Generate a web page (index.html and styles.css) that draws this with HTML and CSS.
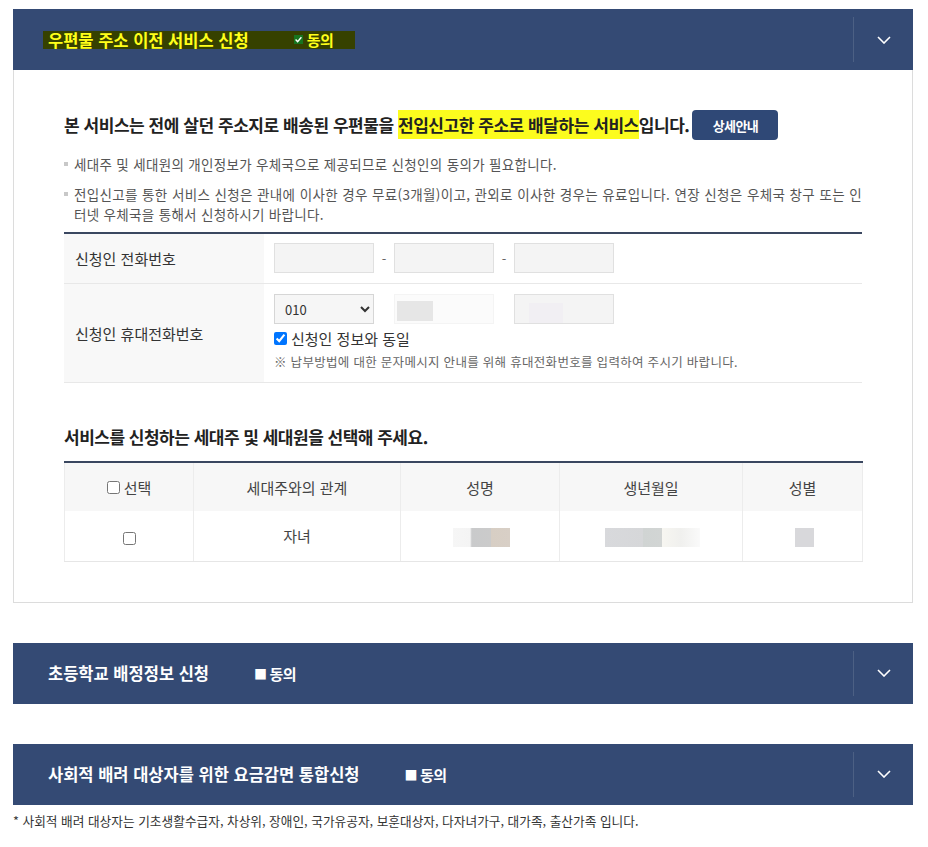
FILE: index.html
```html
<!DOCTYPE html>
<html lang="ko">
<head>
<meta charset="utf-8">
<title>우편물 주소 이전 서비스 신청</title>
<link rel="stylesheet" href="styles.css">
</head>
<body>
<div class="wrap">
  <section class="acc">
    <div class="acc-head">
      <div class="acc-title">
        <span class="hl-dark"><span class="t">우편물 주소 이전 서비스 신청</span><span class="agree"><span class="chk"><svg width="9" height="9" viewBox="0 0 9 9"><polyline points="1.6,4.6 3.6,6.6 7.4,2.2" fill="none" stroke="#fff" stroke-width="1.4"/></svg></span>동의</span></span>
      </div>
      <div class="acc-toggle"><svg width="14" height="8" viewBox="0 0 14 8"><polyline points="1,1 7,7 13,1" fill="none" stroke="#fff" stroke-width="1.6"/></svg></div>
    </div>
    <div class="acc-body">
      <div class="lead">
        <h2 class="lead-text">본 서비스는 전에 살던 주소지로 배송된 우편물을 <mark class="hl-yellow">전입신고한 주소로 배달하는 서비스</mark>입니다.</h2>
        <button class="btn-detail" type="button">상세안내</button>
      </div>
      <ul class="bullets">
        <li>세대주 및 세대원의 개인정보가 우체국으로 제공되므로 신청인의 동의가 필요합니다.</li>
        <li>전입신고를 통한 서비스 신청은 관내에 이사한 경우 무료(3개월)이고, 관외로 이사한 경우는 유료입니다. 연장 신청은 우체국 창구 또는 인터넷 우체국을 통해서 신청하시기 바랍니다.</li>
      </ul>

      <table class="form-table">
        <tr class="r1">
          <th>신청인 전화번호</th>
          <td>
            <div class="phone">
              <span class="inp"></span><span class="dash">-</span><span class="inp"></span><span class="dash">-</span><span class="inp"></span>
            </div>
          </td>
        </tr>
        <tr class="r2">
          <th>신청인 휴대전화번호</th>
          <td>
            <div class="phone">
              <select class="sel"><option>010</option></select><span class="dash blank"></span><span class="inp redact"><span class="rb"></span></span><span class="dash blank"></span><span class="inp redact2"><span class="rb2"></span></span>
            </div>
            <label class="same"><input type="checkbox" checked> 신청인 정보와 동일</label>
            <p class="note">※ 납부방법에 대한 문자메시지 안내를 위해 휴대전화번호를 입력하여 주시기 바랍니다.</p>
          </td>
        </tr>
      </table>

      <h3 class="sub-title">서비스를 신청하는 세대주 및 세대원을 선택해 주세요.</h3>

      <table class="list-table">
        <colgroup>
          <col class="c1"><col class="c2"><col class="c3"><col class="c4"><col class="c5">
        </colgroup>
        <thead>
          <tr>
            <th><label class="all"><input type="checkbox"> 선택</label></th>
            <th>세대주와의 관계</th>
            <th>성명</th>
            <th>생년월일</th>
            <th>성별</th>
          </tr>
        </thead>
        <tbody>
          <tr>
            <td><input type="checkbox"></td>
            <td>자녀</td>
            <td><span class="blur b-name"></span></td>
            <td><span class="blur b-birth"></span></td>
            <td><span class="blur b-sex"></span></td>
          </tr>
        </tbody>
      </table>
    </div>
  </section>

  <section class="acc gap">
    <div class="acc-head">
      <div class="acc-title"><span class="t">초등학교 배정정보 신청</span><span class="agree"><span class="sq">■</span>동의</span></div>
      <div class="acc-toggle"><svg width="14" height="8" viewBox="0 0 14 8"><polyline points="1,1 7,7 13,1" fill="none" stroke="#fff" stroke-width="1.6"/></svg></div>
    </div>
  </section>

  <section class="acc gap">
    <div class="acc-head">
      <div class="acc-title"><span class="t">사회적 배려 대상자를 위한 요금감면 통합신청</span><span class="agree"><span class="sq">■</span>동의</span></div>
      <div class="acc-toggle"><svg width="14" height="8" viewBox="0 0 14 8"><polyline points="1,1 7,7 13,1" fill="none" stroke="#fff" stroke-width="1.6"/></svg></div>
    </div>
    <p class="foot">* 사회적 배려 대상자는 기초생활수급자, 차상위, 장애인, 국가유공자, 보훈대상자, 다자녀가구, 대가족, 출산가족 입니다.</p>
  </section>
</div>
</body>
</html>
```

FILE: styles.css
```css
* { box-sizing: border-box; }
body {
  margin: 0;
  background: #fff;
  color: #333;
  font-family: "Noto Sans CJK KR", "Noto Sans", sans-serif;
}
.wrap {
  width: 900px;
  margin: 0 0 0 13px;
  padding-top: 9px;
}
.acc.gap { margin-top: 40px; }

.acc-head {
  display: flex;
  align-items: stretch;
  height: 61px;
  background: #344a74;
}
.acc-title {
  flex: 1;
  display: flex;
  align-items: center;
  padding-left: 35px;
  color: #fff;
  font-weight: 700;
  font-size: 16.5px;
  letter-spacing: 0;
}
.acc-title .t { line-height: 20px; }
.hl-dark {
  display: flex;
  align-items: center;
  height: 18px;
  margin-left: -5px;
  padding: 0 22px 0 5px;
  background: #364100;
  color: #ffff1a;
}
.agree {
  display: inline-flex;
  align-items: center;
  margin-left: 45px;
  font-size: 15px;
  font-weight: 700;
  letter-spacing: -0.5px;
}
.chk {
  display: inline-flex;
  align-items: center;
  justify-content: center;
  width: 9px;
  height: 9px;
  margin-right: 4px;
  background: #17751f;
}
.sq {
  font-size: 13px;
  margin-right: 3px;
}
.acc-toggle {
  width: 60px;
  margin: 8px 0;
  border-left: 1px solid rgba(255, 255, 255, 0.12);
  display: flex;
  align-items: center;
  justify-content: center;
}

.acc-body {
  border: 1px solid #dcdcdc;
  border-top: none;
  padding: 40px 50px 40px 50px;
}
.lead {
  display: flex;
  align-items: center;
  height: 30px;
}
.lead-text {
  margin: 0;
  font-size: 17px;
  font-weight: 700;
  letter-spacing: -0.45px;
  color: #222;
  line-height: 26px;
}
.hl-yellow {
  background: #fcfc1e;
  color: #222;
  padding: 2px 0;
}
.btn-detail {
  margin-left: 3px;
  width: 86px;
  height: 30px;
  border: none;
  border-radius: 4px;
  background: #2f4876;
  color: #fff;
  font-family: inherit;
  font-weight: 700;
  font-size: 13px;
  letter-spacing: -0.6px;
}

.bullets {
  list-style: none;
  margin: 14px 0 0;
  padding: 0;
}
.bullets li {
  position: relative;
  padding-left: 10px;
  font-size: 13.5px;
  letter-spacing: 0.32px;
  line-height: 20px;
  color: #555;
  text-align: justify;
}
.bullets li + li { margin-top: 10px; }
.bullets li::before {
  content: "";
  position: absolute;
  left: 0;
  top: 8px;
  width: 4px;
  height: 4px;
  background: #c8c8c8;
}

.form-table {
  width: 100%;
  margin-top: 8px;
  border-collapse: collapse;
  border-top: 2px solid #3a4760;
}
.form-table th {
  width: 200px;
  background: #f8f8f8;
  text-align: left;
  padding-left: 11px;
  font-size: 15px;
  font-weight: 400;
  color: #333;
}
.form-table td { padding: 9px 10px 10px; }
.form-table tr { border-bottom: 1px solid #e8e8e8; }
.form-table tr.r1 th, .form-table tr.r1 td { height: 49px; }
.form-table tr.r2 td { padding: 10px 10px 10px; }
.phone {
  display: flex;
  align-items: center;
}
.inp {
  display: block;
  width: 100px;
  height: 30px;
  background: #f4f4f4;
  border: 1px solid #e0e0e0;
}
.dash {
  width: 20px;
  text-align: center;
  font-size: 13px;
  color: #666;
}
.inp.redact {
  position: relative;
  background: #fbfbfb;
  border-color: #f4f4f4;
}
.rb {
  position: absolute;
  left: 2px;
  top: 6px;
  width: 36px;
  height: 20px;
  background: #e6e6e6;
}
.inp.redact2 { position: relative; }
.rb2 {
  position: absolute;
  left: 14px;
  top: 8px;
  width: 34px;
  height: 20px;
  background: #f1eff3;
}
.sel {
  width: 100px;
  height: 30px;
  border: 1px solid #d6d6d6;
  background: #f6f6f6;
  font-family: inherit;
  font-size: 13px;
  color: #333;
  padding-left: 6px;
}
.same {
  display: flex;
  align-items: center;
  height: 20px;
  margin-top: 4px;
  font-size: 15px;
  color: #333;
}
.same input {
  width: 13px;
  height: 13px;
  margin: 0 4px 0 0;
}
.note {
  margin: 4px 0 0;
  font-size: 12.5px;
  letter-spacing: 0.3px;
  line-height: 20px;
  color: #666;
}

.sub-title {
  margin: 41px 0 0;
  font-size: 17px;
  line-height: 26px;
  font-weight: 700;
  letter-spacing: -0.5px;
  color: #222;
}
.list-table {
  width: 100%;
  margin-top: 11px;
  border-collapse: collapse;
  table-layout: fixed;
  border-top: 2px solid #3a4760;
}
.list-table .c1 { width: 129px; }
.list-table .c2 { width: 207px; }
.list-table .c3 { width: 159px; }
.list-table .c4 { width: 183px; }
.list-table .c5 { width: 120px; }
.list-table th, .list-table td {
  border: 1px solid #ececec;
  border-top: none;
  text-align: center;
  font-size: 15px;
  color: #444;
}
.list-table th {
  height: 49px;
  background: #f7f7f7;
  font-weight: 400;
  border-bottom: none;
}
.list-table td {
  height: 50px;
  border-bottom: 1px solid #e6e6e6;
}
.list-table input {
  width: 13px;
  height: 13px;
  margin: 0;
  vertical-align: middle;
}
.all {
  display: inline-flex;
  align-items: center;
  gap: 4px;
}
.blur {
  display: inline-block;
  height: 19px;
  vertical-align: middle;
}
.b-name {
  width: 57px;
  background: linear-gradient(90deg, #f6f6f6 0, #f4f4f4 30%, #c9cacb 33%, #cbcbcb 66%, #d7cec4 66%, #d8cfc6 100%);
  margin-left: 2px;
}
.b-birth {
  width: 95px;
  background: linear-gradient(90deg, #d8d9dc 0, #d6d7d9 40%, #d0d4d3 40%, #d2d5d4 60%, #f7f6f1 60%, #f0f0ee 80%, #fafafa 100%);
  margin-left: 2px;
}
.b-sex {
  width: 19px;
  background: #d8d8db;
  margin-left: 4px;
}

.foot {
  margin: 6px 0 0;
  font-size: 12.7px;
  line-height: 20px;
  color: #333;
}
```
